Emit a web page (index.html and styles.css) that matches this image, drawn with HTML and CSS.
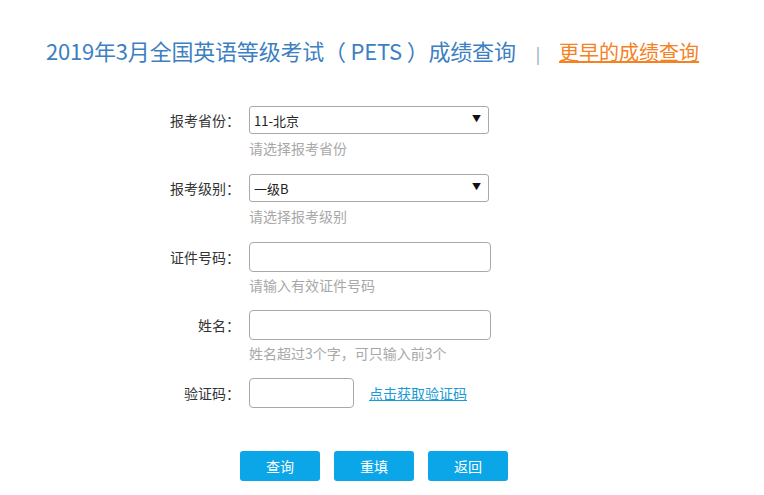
FILE: index.html
```html
<!DOCTYPE html>
<html lang="zh-CN">
<head>
<meta charset="utf-8">
<title>成绩查询</title>
<link rel="stylesheet" href="styles.css">
</head>
<body>
<div class="page">
  <div class="header">
    <h1 class="title">2019年3月全国英语等级考试（ PETS ）成绩查询</h1>
    <span class="sep">|</span>
    <a class="earlier" href="#">更早的成绩查询</a>
  </div>

  <form class="form">
    <div class="row">
      <label class="label">报考省份：</label>
      <div class="field">
        <div class="select-wrap">
          <select class="select"><option>11-北京</option></select>
          <span class="caret">▼</span>
        </div>
        <div class="hint">请选择报考省份</div>
      </div>
    </div>
    <div class="row">
      <label class="label">报考级别：</label>
      <div class="field">
        <div class="select-wrap">
          <select class="select"><option>一级B</option></select>
          <span class="caret">▼</span>
        </div>
        <div class="hint">请选择报考级别</div>
      </div>
    </div>
    <div class="row">
      <label class="label label-tall">证件号码：</label>
      <div class="field">
        <input class="input" type="text">
        <div class="hint hint-input">请输入有效证件号码</div>
      </div>
    </div>
    <div class="row">
      <label class="label label-tall">姓名：</label>
      <div class="field">
        <input class="input" type="text">
        <div class="hint hint-input">姓名超过3个字，可只输入前3个</div>
      </div>
    </div>
    <div class="row row-last">
      <label class="label label-tall">验证码：</label>
      <div class="field field-inline">
        <input class="input input-code" type="text">
        <a class="code-link" href="#">点击获取验证码</a>
      </div>
    </div>
    <div class="buttons">
      <button type="button" class="btn">查询</button>
      <button type="button" class="btn">重填</button>
      <button type="button" class="btn">返回</button>
    </div>
  </form>
</div>
</body>
</html>
```

FILE: styles.css
```css
* { box-sizing: border-box; }
html, body { margin: 0; padding: 0; background: #fff; }
body {
  font-family: "Noto Sans CJK SC", "Noto Sans", "Liberation Sans", sans-serif;
  color: #333;
  font-size: 14px;
}
.page { width: 764px; }

.header {
  display: flex;
  align-items: baseline;
  padding: 35px 0 0 46px;
  height: 106px;
}
.title {
  margin: 0;
  font-size: 22px;
  font-weight: normal;
  color: #3d7fc1;
  line-height: 30px;
  letter-spacing: -0.2px;
  white-space: pre;
}
.sep {
  color: #7f9dbb;
  font-size: 16px;
  margin-left: 20px;
  margin-right: 19px;
}
.earlier {
  font-size: 20px;
  color: #f5821f;
  text-decoration: underline;
  line-height: 30px;
}

.form { padding: 0; }
.row {
  display: flex;
  align-items: flex-start;
  height: 68px;
}
.row-last { height: 73px; }
.label {
  width: 240px;
  text-align: right;
  margin-right: 9px;
  line-height: 29px;
  font-size: 14px;
  color: #333;
}
.label-tall { line-height: 30px; }
.field { display: flex; flex-direction: column; }
.field-inline { flex-direction: row; align-items: center; }

.select-wrap { position: relative; width: 240px; height: 28px; }
.select {
  -webkit-appearance: none;
  appearance: none;
  width: 240px;
  height: 28px;
  border: 1px solid #a9a9a9;
  border-radius: 3px;
  background: #fff;
  font-family: inherit;
  font-size: 13px;
  color: #222;
  padding: 0 0 0 4px;
  margin: 0;
  outline: none;
}
.caret {
  position: absolute;
  right: 8px;
  top: 8px;
  font-size: 9px;
  line-height: 10px;
  color: #111;
  pointer-events: none;
}
.hint {
  margin-top: 4px;
  line-height: 21px;
  font-size: 14px;
  color: #a8a8a8;
}
.hint-input { margin-top: 3px; }

.input {
  width: 242px;
  height: 30px;
  border: 1px solid #a9a9a9;
  border-radius: 4px;
  margin: 0;
  padding: 0 6px;
  font-family: inherit;
  font-size: 14px;
  outline: none;
  background: #fff;
}
.input-code { width: 105px; }
.code-link {
  margin-left: 15px;
  color: #1a9ad6;
  font-size: 14px;
  text-decoration: underline;
}

.buttons {
  display: flex;
  gap: 14px;
  padding-left: 240px;
}
.btn {
  width: 80px;
  height: 30px;
  border: none;
  border-radius: 3px;
  background: #0ba6e8;
  color: #fff;
  font-family: inherit;
  font-size: 14px;
  padding: 0;
  cursor: pointer;
}
```
